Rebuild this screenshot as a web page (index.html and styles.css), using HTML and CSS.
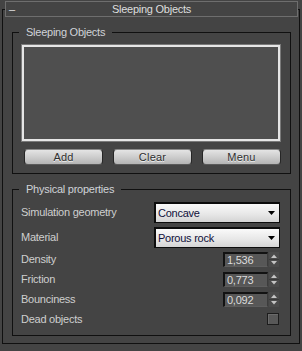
FILE: index.html
```html
<!DOCTYPE html>
<html>
<head>
<meta charset="utf-8">
<link rel="stylesheet" href="styles.css">
</head>
<body>
<div class="frame">
  <div class="rollhead">
    <span class="minus">–</span>
    <span class="rolltitle">Sleeping Objects</span>
    <span></span>
  </div>

  <div class="group g1">
    <span class="legend">Sleeping Objects</span>
    <div class="listbox"></div>
    <div class="btnrow">
      <button class="btn">Add</button>
      <button class="btn">Clear</button>
      <button class="btn">Menu</button>
    </div>
  </div>

  <div class="group g2">
    <span class="legend">Physical properties</span>
    <div class="rows">
      <div class="row dd">
        <span class="lbl">Simulation geometry</span>
        <div class="select"><span class="selval">Concave</span><svg class="ddarrow" width="7" height="4" viewBox="0 0 7 4"><polygon points="0,0 7,0 3.5,4" fill="#000"/></svg></div>
      </div>
      <div class="row dd">
        <span class="lbl">Material</span>
        <div class="select"><span class="selval">Porous rock</span><svg class="ddarrow" width="7" height="4" viewBox="0 0 7 4"><polygon points="0,0 7,0 3.5,4" fill="#000"/></svg></div>
      </div>
      <div class="row sp">
        <span class="lbl">Density</span>
        <div class="spinner"><span class="spinval">1,536</span><svg class="spinbtn" width="10" height="15" viewBox="0 0 10 15"><rect x="0" y="0" width="10" height="15" fill="#4b4b4b"/><line x1="0" y1="7.5" x2="10" y2="7.5" stroke="#3a3a3a"/><polygon points="2,6 8,6 5,2.5" fill="#c4c4c4"/><polygon points="2,9 8,9 5,12.5" fill="#c4c4c4"/></svg></div>
      </div>
      <div class="row sp">
        <span class="lbl">Friction</span>
        <div class="spinner"><span class="spinval">0,773</span><svg class="spinbtn" width="10" height="15" viewBox="0 0 10 15"><rect x="0" y="0" width="10" height="15" fill="#4b4b4b"/><line x1="0" y1="7.5" x2="10" y2="7.5" stroke="#3a3a3a"/><polygon points="2,6 8,6 5,2.5" fill="#c4c4c4"/><polygon points="2,9 8,9 5,12.5" fill="#c4c4c4"/></svg></div>
      </div>
      <div class="row sp">
        <span class="lbl">Bounciness</span>
        <div class="spinner"><span class="spinval">0,092</span><svg class="spinbtn" width="10" height="15" viewBox="0 0 10 15"><rect x="0" y="0" width="10" height="15" fill="#4b4b4b"/><line x1="0" y1="7.5" x2="10" y2="7.5" stroke="#3a3a3a"/><polygon points="2,6 8,6 5,2.5" fill="#c4c4c4"/><polygon points="2,9 8,9 5,12.5" fill="#c4c4c4"/></svg></div>
      </div>
      <div class="row ck">
        <span class="lbl">Dead objects</span>
        <span class="check"></span>
      </div>
    </div>
  </div>
</div>
</body>
</html>
```

FILE: styles.css
```css
html, body {
  margin: 0;
  padding: 0;
  background: #444444;
}
body {
  font-family: "Liberation Sans", Arial, sans-serif;
  font-size: 11px;
  letter-spacing: -0.25px;
  color: #d0d0d0;
}
.frame {
  box-sizing: border-box;
  width: 298px;
  margin: 9px 0 0 2px;
  border: 1px solid #101010;
  padding: 0 0 7px 0;
  display: flex;
  flex-direction: column;
}
.rollhead {
  box-sizing: border-box;
  height: 16px;
  margin: -9px 1px 0 2px;
  border: 1px solid #6e6e6e;
  background: #444444;
  display: grid;
  grid-template-columns: 1fr auto 1fr;
  align-items: center;
}
.minus {
  padding-left: 3px;
  color: #e0e0e0;
  line-height: 12px;
}
.rolltitle {
  color: #dedede;
  line-height: 13px;
}
.group {
  box-sizing: border-box;
  width: 279px;
  margin: 15px 8px 0 9px;
  border: 1px solid #101010;
  display: flex;
  flex-direction: column;
}
.legend {
  align-self: flex-start;
  margin: -7px 0 0 6px;
  padding: 0 7px;
  height: 13px;
  line-height: 13px;
  background: #444444;
  color: #d0d3d8;
}
.listbox {
  box-sizing: border-box;
  width: 258px;
  height: 96px;
  margin: 6px 0 0 9px;
  border: 2px solid #e6e6e6;
  box-shadow: 0 0 0 1px #7a7a7a;
  background: #4f4f4f;
}
.btnrow {
  display: flex;
  gap: 10px;
  margin: 8px 0 8px 11px;
}
.btn {
  box-sizing: border-box;
  width: 79px;
  height: 16px;
  padding: 0;
  border: 1px solid #262626;
  border-top-color: #8a8a8a;
  border-bottom-color: #5a5a5a;
  border-radius: 4px;
  background: linear-gradient(#e4e4e4, #cfcfcf 45%, #b4b4b4);
  font-family: "Liberation Sans", Arial, sans-serif;
  font-size: 11px;
  letter-spacing: 0.2px;
  color: #2e2e2e;
  text-shadow: 0 1px 0 #efefef;
  line-height: 14px;
}
.rows {
  display: flex;
  flex-direction: column;
  margin: 6px 10px 9px 8px;
}
.row {
  display: flex;
  align-items: center;
  justify-content: space-between;
}
.row.dd {
  height: 21px;
  margin-bottom: 4px;
}
.row.sp {
  height: 15px;
  margin-bottom: 5px;
}
.row.ck {
  height: 14px;
}
.lbl {
  color: #cfcfcf;
  line-height: 13px;
}
.select {
  box-sizing: border-box;
  width: 126px;
  height: 21px;
  border: 1px solid #0c0c0c;
  border-top-width: 2px;
  border-left-width: 2px;
  background: linear-gradient(#fafafa, #e6e6e6 60%, #d4d4d4);
  display: flex;
  align-items: center;
  justify-content: space-between;
  padding: 0 4px 0 2px;
}
.selval {
  color: #10103a;
  line-height: 13px;
}
.ddarrow {
  display: block;
}
.spinner {
  display: flex;
  align-items: stretch;
  gap: 1px;
  margin-right: 1px;
  height: 15px;
}
.spinval {
  box-sizing: border-box;
  width: 45px;
  height: 15px;
  border-top: 2px solid #121212;
  border-left: 2px solid #121212;
  border-right: 1px solid #3c3c3c;
  border-bottom: 1px solid #5e5e5e;
  background: #575757;
  color: #dcdcdc;
  padding-left: 2px;
  line-height: 12px;
}
.spinbtn {
  display: block;
}
.check {
  box-sizing: border-box;
  width: 12px;
  height: 12px;
  margin-right: 1px;
  border: 1px solid #1c1c1c;
  background: #585858;
  box-shadow: inset 1px 1px 0 #6a6a6a;
}
```
